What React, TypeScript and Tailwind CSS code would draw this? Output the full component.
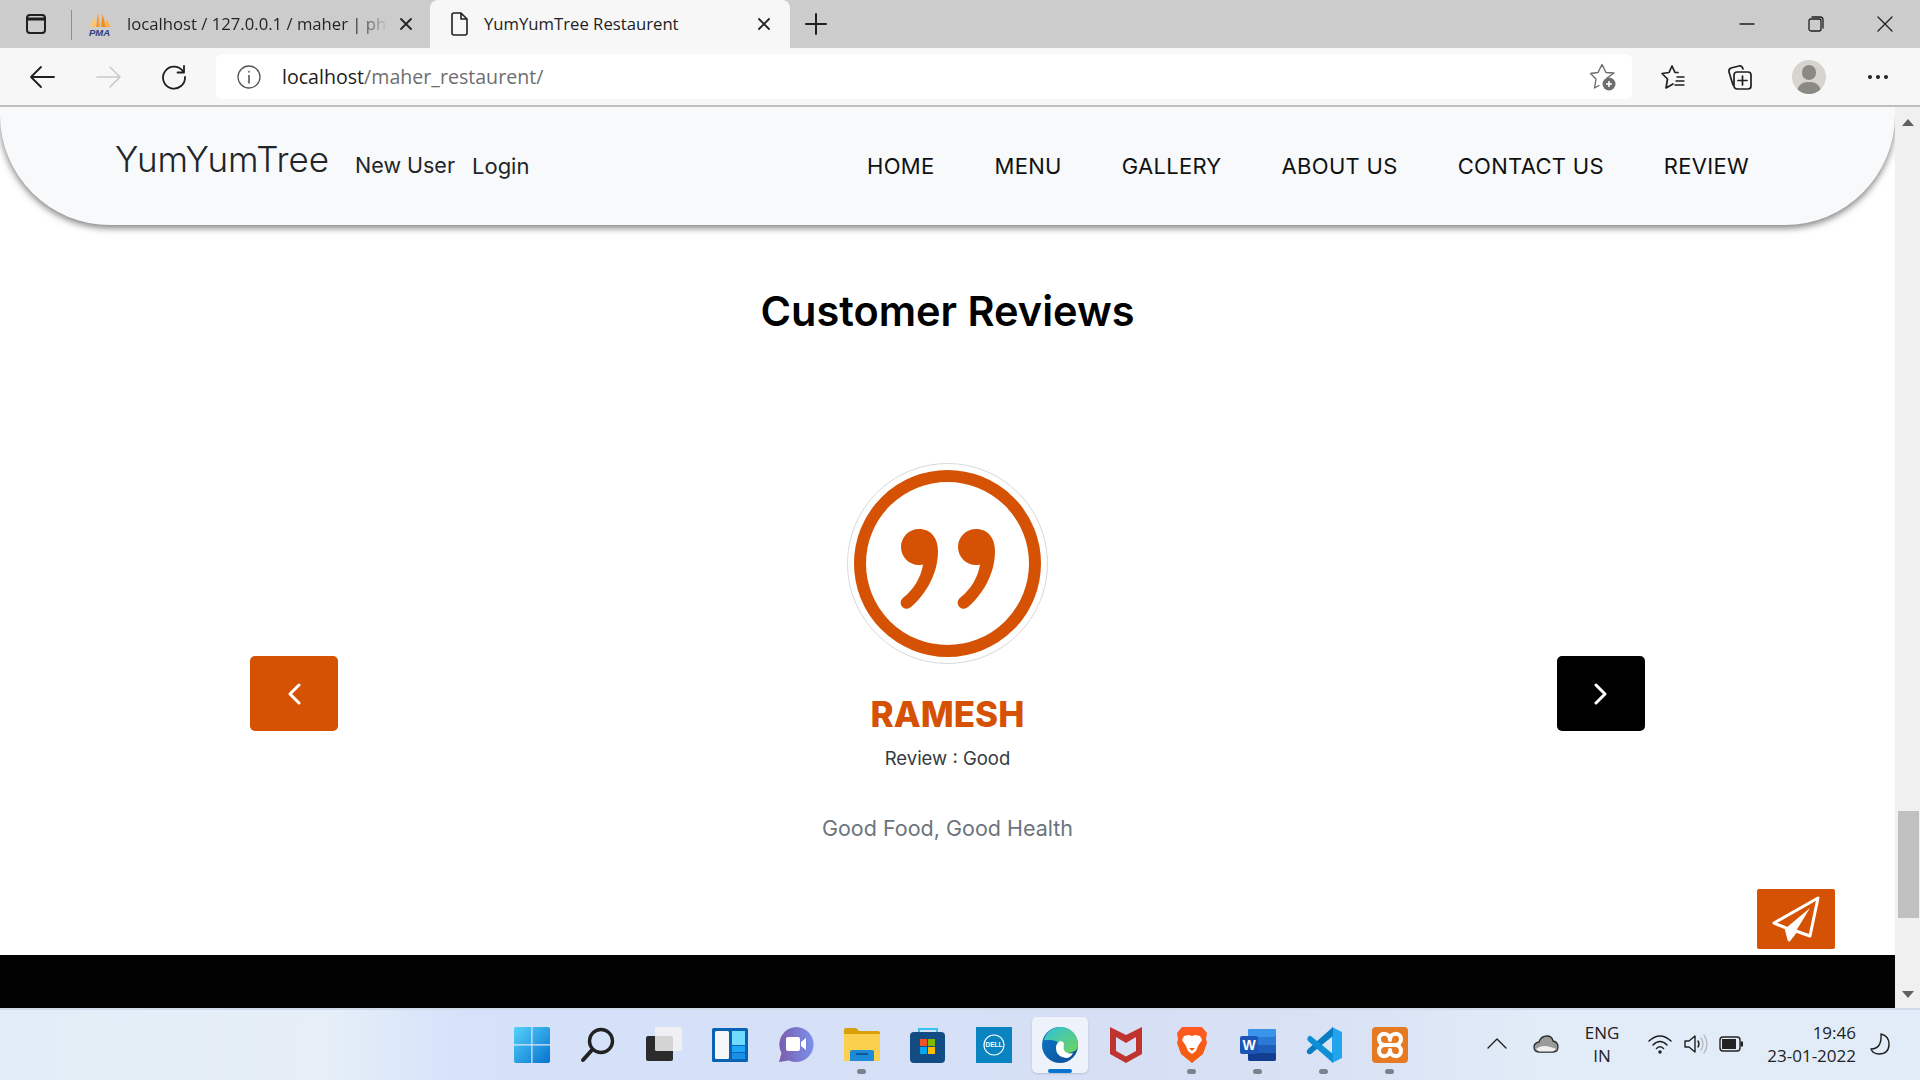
import React from "react";

const ORANGE = "#d55204";

function Stroke({ w, h, children, sw = 1.5, color = "#1f1f1f", className = "" }: { w: number; h: number; children: React.ReactNode; sw?: number; color?: string; className?: string }) {
  return (
    <svg width={w} height={h} viewBox={`0 0 ${w} ${h}`} fill="none" stroke={color} strokeWidth={sw} strokeLinecap="round" strokeLinejoin="round" className={className}>
      {children}
    </svg>
  );
}

function CloseX({ color = "#222" }: { color?: string }) {
  return (
    <Stroke w={14} h={14} sw={1.8} color={color}>
      <path d="M2 2 L12 12 M12 2 L2 12" />
    </Stroke>
  );
}

function PmaLogo() {
  return (
    <svg width="24" height="24" viewBox="0 0 24 24">
      <path d="M1 15 L7 5 L7 15 Z" fill="#fbc66e" />
      <path d="M8 15 L10 1 L12 15 Z" fill="#f79a24" />
      <path d="M13 15 L14.5 2 L18 15 Z" fill="#f28c1e" />
      <path d="M18 15 L18 7 L23 15 Z" fill="#f9b04a" />
      <text x="1" y="23.5" fontSize="9.5" fontWeight="700" fontStyle="italic" fill="#2f3c80" fontFamily="Liberation Sans">PMA</text>
    </svg>
  );
}

function TabBar() {
  return (
    <div className="flex h-[48px] shrink-0 items-start bg-[#cccccc] font-['Open_Sans',sans-serif] text-[#222]">
      <div className="flex h-[48px] w-[71px] items-center pl-[26px]">
        <Stroke w={20} h={20} sw={2}>
          <rect x="1" y="1" width="18" height="18" rx="3" />
          <path d="M1 5 H19" strokeWidth={3} />
        </Stroke>
      </div>
      <div className="mt-[10px] h-[30px] w-px bg-[#8f8f8f]" />
      <div className="flex h-[48px] w-[358px] items-center pl-[16px]">
        <PmaLogo />
        <span className="ml-[15px] w-[258px] whitespace-nowrap bg-gradient-to-r from-[#222] from-[88%] to-[#bdbdbd] bg-clip-text text-[16.7px] text-transparent">
          localhost / 127.0.0.1 / maher | ph
        </span>
        <span className="ml-[14px] flex"><CloseX /></span>
      </div>
      <div className="flex h-[48px] w-[360px] items-center rounded-t-[8px] bg-[#f7f7f7] pl-[20px]">
        <Stroke w={18} h={24} sw={1.6}>
          <path d="M2 3 Q2 1 4 1 H11 L17 7 V21 Q17 23 15 23 H4 Q2 23 2 21 Z M11 1 V7 H17" />
        </Stroke>
        <span className="ml-[16px] w-[273px] whitespace-nowrap text-[16.7px] leading-none">YumYumTree Restaurent</span>
        <span className="flex"><CloseX /></span>
      </div>
      <div className="flex h-[48px] w-[52px] items-center justify-center">
        <Stroke w={22} h={22} sw={2}>
          <path d="M11 1 V21 M1 11 H21" />
        </Stroke>
      </div>
      <div className="ml-auto flex h-[48px] items-center pr-[27px]">
        <Stroke w={16} h={16} sw={1.3}><path d="M1 8 H15" /></Stroke>
        <div className="ml-[53px] flex">
          <Stroke w={16} h={16} sw={1.3}>
            <rect x="1" y="3" width="12" height="12" rx="2" />
            <path d="M4 1 H12 Q15 1 15 4 V12" />
          </Stroke>
        </div>
        <div className="ml-[53px] flex">
          <Stroke w={16} h={16} sw={1.3}><path d="M1 1 L15 15 M15 1 L1 15" /></Stroke>
        </div>
      </div>
    </div>
  );
}

function ToolBar() {
  return (
    <div className="flex h-[59px] shrink-0 items-start border-b-2 border-[#bfbfbf] bg-[#f7f7f7] font-['Open_Sans',sans-serif]">
      <div className="flex h-[57px] w-[216px] items-center pl-[29px]">
        <Stroke w={26} h={24} sw={1.8}>
          <path d="M25 12 H2 M12 2 L2 12 L12 22" />
        </Stroke>
        <div className="ml-[41px] flex">
          <Stroke w={26} h={24} sw={1.6} color="#c9c9c9">
            <path d="M1 12 H24 M14 2 L24 12 L14 22" />
          </Stroke>
        </div>
        <div className="ml-[39px] flex">
          <Stroke w={26} h={26} sw={1.8}>
            <path d="M22.5 8 A11 11 0 1 0 24 13" />
            <path d="M23 2 V8.5 H16.5" />
          </Stroke>
        </div>
      </div>
      <div className="mt-[6px] flex h-[45px] w-[1416px] items-center rounded-[6px] bg-white pl-[21px] pr-[15px]">
        <Stroke w={24} h={24} sw={1.3} color="#555">
          <circle cx="12" cy="12" r="11" />
          <path d="M12 10.5 V18 M12 6.5 V7" strokeWidth={1.6} />
        </Stroke>
        <span className="ml-[21px] text-[19.6px] leading-none text-[#1c1c1c]">localhost<span className="text-[#6e6e6e]">/maher_restaurent/</span></span>
        <div className="ml-auto flex">
          <svg width="28" height="28" viewBox="0 0 28 28" fill="none">
            <path d="M18 15 L25 10 L17 9.5 L13 1.5 L9 9.5 L1.5 10.5 L7 16 L5.5 25 L10 22.5" stroke="#6d6d6d" strokeWidth="1.4" strokeLinejoin="round" strokeLinecap="round" />
            <circle cx="20" cy="21" r="6.5" fill="#6d6d6d" />
            <path d="M20 18 V24 M17 21 H23" stroke="#fff" strokeWidth="1.6" />
          </svg>
        </div>
      </div>
      <div className="flex h-[57px] flex-1 items-center">
        <div className="ml-[28px] flex">
          <Stroke w={26} h={26} sw={1.7}>
            <path d="M18 8.5 L15 8.5 L12 2 L9 8.5 L2 9.5 L7.5 15 L6 24 L13 20" />
            <path d="M17 13 H24 M16 17 H24 M15 21 H24" strokeWidth={1.4} />
          </Stroke>
        </div>
        <div className="ml-[41px] flex">
          <Stroke w={26} h={26} sw={1.7}>
            <path d="M6 21 L2 8 Q1.5 5 4 4 L12 2 Q15 1.5 16 5" />
            <rect x="7" y="8" width="17" height="17" rx="3" />
            <path d="M15.5 12 V21 M11 16.5 H20" />
          </Stroke>
        </div>
        <div className="relative ml-[39px] flex h-[34px] w-[34px] items-center justify-center overflow-hidden rounded-full bg-[#d6d4cf]">
          <div className="absolute left-[10px] top-[5px] h-[15px] w-[14px] rounded-full bg-[#8b8984]" />
          <div className="absolute left-[5px] top-[22px] h-[20px] w-[24px] rounded-full bg-[#8b8984]" />
        </div>
        <div className="ml-[42px] flex gap-[4px]">
          <div className="h-[4px] w-[4px] rounded-full bg-[#222]" />
          <div className="h-[4px] w-[4px] rounded-full bg-[#222]" />
          <div className="h-[4px] w-[4px] rounded-full bg-[#222]" />
        </div>
      </div>
    </div>
  );
}

function Header() {
  const nav = ["HOME", "MENU", "GALLERY", "ABOUT US", "CONTACT US", "REVIEW"];
  return (
    <header className="relative z-10 flex h-[118px] shrink-0 items-center rounded-b-[110px] bg-[#f8f9fa] pl-[115px] pr-[116px] shadow-[0_3px_7px_rgba(0,0,0,0.5)]">
      <span className="mb-[14px] text-[35px] font-light leading-none text-[#212529]">YumYumTree</span>
      <span className="ml-[26px] text-[21.5px] leading-none text-[#212529]">New User</span>
      <span className="ml-[17px] text-[22px] leading-none text-[#212529]">Login</span>
      <nav className="ml-auto flex">
        {nav.map((n) => (
          <span key={n} className="px-[30px] text-[22px] leading-none tracking-[0.3px] text-[#111]">{n}</span>
        ))}
      </nav>
    </header>
  );
}

function QuoteMark() {
  const d = "M72 66 C84 66 91 75 91 88 C91 112 78 132 64 144 C60 147 56 146 54 142 C53 139 54 136 57 134 C66 127 74 115 76 101.5 C74 102 73 102 72 102 C62 102 54 94 54 84 C54 74 62 66 72 66 Z";
  return (
    <svg width="201" height="201" viewBox="0 0 201 201" fill="none">
      <circle cx="100.5" cy="100.5" r="100" stroke="#d5d9de" strokeWidth="1" />
      <circle cx="100.5" cy="100.5" r="87.5" stroke={ORANGE} strokeWidth="12" />
      <path d={d} fill={ORANGE} />
      <path d={d} fill={ORANGE} transform="translate(57 0)" />
    </svg>
  );
}

function Chevron({ dir }: { dir: "l" | "r" }) {
  return (
    <Stroke w={14} h={22} sw={3} color="#fff">
      <path d={dir === "l" ? "M12 2 L3 11 L12 20" : "M2 2 L11 11 L2 20"} />
    </Stroke>
  );
}

function Reviews() {
  return (
    <section className="relative flex flex-1 flex-col items-center bg-white">
      <h1 className="mt-[62px] text-[41.5px] font-semibold leading-[48px] text-black">Customer Reviews</h1>
      <div className="mt-[128px] flex w-full items-start justify-between px-[250px]">
        <div className="mt-[193px] flex h-[75px] w-[88px] items-center justify-center rounded-[5px] bg-[#d55204]">
          <Chevron dir="l" />
        </div>
        <div className="flex flex-col items-center">
          <QuoteMark />
          <div className="mt-[29px] text-[35px] font-extrabold leading-[42px] text-[#d55204]">RAMESH</div>
          <div className="mt-[10px] text-[18.5px] leading-[27px] text-[#343a40]">Review : Good</div>
          <div className="mt-[40px] text-[21.5px] leading-[32px] text-[#6c757d]">Good Food, Good Health</div>
        </div>
        <div className="mt-[193px] flex h-[75px] w-[88px] items-center justify-center rounded-[5px] bg-black">
          <Chevron dir="r" />
        </div>
      </div>
      <div className="absolute left-[1757px] top-[664px] flex h-[60px] w-[78px] items-center justify-center rounded-[2px] bg-[#d55204]">
        <svg width="48" height="46" viewBox="0 0 48 46" fill="none">
          <path d="M46 2 L2 27 L14 32 L17 44 L24 35 L38 40 Z" stroke="#fff" strokeWidth="3" strokeLinejoin="round" />
          <path d="M38 12 L14 32 L17 44 L24 35 Z" fill="#fff" />
        </svg>
      </div>
    </section>
  );
}

function Scrollbar() {
  return (
    <div className="flex w-[25px] shrink-0 flex-col items-center bg-[#f0f0f0]">
      <svg className="mt-[12px]" width="12" height="7" viewBox="0 0 12 7"><path d="M6 0 L12 7 H0 Z" fill="#606060" /></svg>
      <div className="ml-[2px] mt-[685px] h-[107px] w-[21px] bg-[#c0c0c0]" />
      <svg className="mt-[73px]" width="12" height="7" viewBox="0 0 12 7"><path d="M0 0 H12 L6 7 Z" fill="#606060" /></svg>
    </div>
  );
}

function Tile({ children, dot, active }: { children: React.ReactNode; dot?: boolean; active?: boolean }) {
  return (
    <div className="relative flex h-[72px] w-[36px] items-center justify-center pt-[2px]">
      {active && <div className="absolute -left-[10px] top-[9px] h-[56px] w-[56px] rounded-[5px] bg-[#eef2fb] shadow-[0_1px_2px_rgba(0,0,0,0.15)]" />}
      {active && <div className="absolute left-[6px] top-[61px] h-[4px] w-[24px] rounded-full bg-[#0a74d1]" />}
      {dot && <div className="absolute left-[13px] top-[61px] h-[5px] w-[9px] rounded-full bg-[#7c818c]" />}
      <div className="relative flex">{children}</div>
    </div>
  );
}

function TaskIcons() {
  return (
    <div className="flex gap-[30px]">
      <Tile>
        <svg width="36" height="36" viewBox="0 0 36 36">
          <defs><linearGradient id="w" x1="0" y1="0" x2="1" y2="1"><stop offset="0" stopColor="#55d2fb" /><stop offset="1" stopColor="#0672cf" /></linearGradient></defs>
          <rect x="0" y="0" width="36" height="36" rx="2" fill="url(#w)" />
          <path d="M17.9 0 V36 M0 17.9 H36" stroke="#dbe6f7" strokeWidth="1.2" />
        </svg>
      </Tile>
      <Tile>
        <Stroke w={36} h={36} sw={3.4} color="#222">
          <circle cx="21" cy="14" r="11.5" />
          <path d="M12 23 L3 33" strokeWidth={4} />
        </Stroke>
      </Tile>
      <Tile>
        <svg width="36" height="36" viewBox="0 0 36 36">
          <rect x="0" y="9" width="27" height="25" rx="2" fill="#2b2b2b" />
          <rect x="9" y="0" width="27" height="24" rx="1.5" fill="#f2f2f2" fillOpacity="0.85" />
        </svg>
      </Tile>
      <Tile>
        <svg width="36" height="34" viewBox="0 0 36 34">
          <rect width="36" height="34" rx="1.5" fill="#0a62b3" />
          <rect x="3" y="3" width="14" height="28" rx="1.5" fill="#f4f6f8" />
          <rect x="20" y="3" width="13" height="14" fill="#6fdcff" />
          <rect x="20" y="18" width="13" height="6" fill="#1da6f5" />
          <rect x="20" y="25" width="13" height="6" fill="#1a8fe6" />
        </svg>
      </Tile>
      <Tile>
        <svg width="36" height="36" viewBox="0 0 36 36">
          <defs><linearGradient id="c" x1="0" y1="0" x2="1" y2="0"><stop offset="0" stopColor="#7a5cae" /><stop offset="1" stopColor="#7a92ea" /></linearGradient></defs>
          <path d="M18 0 A17.5 17.5 0 1 1 11 33.5 L1 35 L3.5 26 A17.5 17.5 0 0 1 18 0 Z" fill="url(#c)" />
          <rect x="8" y="10" width="14" height="14" rx="2" fill="#fff" />
          <path d="M23 15 L28 11 V23 L23 19 Z" fill="#fff" />
        </svg>
      </Tile>
      <Tile dot>
        <svg width="36" height="34" viewBox="0 0 36 34">
          <path d="M0 2 Q0 0 2 0 H12 L15 3 H34 Q36 3 36 5 V10 H0 Z" fill="#d9a107" />
          <path d="M0 6 H36 V33 H0 Z" fill="#fcd04f" />
          <path d="M6 33 V24 Q6 22 8 22 H28 Q30 22 30 24 V33 Z" fill="#1c8ad6" />
          <path d="M12 26 H24" stroke="#0c4f88" strokeWidth="1.6" />
        </svg>
      </Tile>
      <Tile>
        <svg width="36" height="36" viewBox="0 0 36 36" fill="none">
          <path d="M9 7 V2 H27 V7" stroke="#35c3f2" strokeWidth="2" />
          <rect y="5" width="35" height="31" rx="4" fill="#134b83" />
          <rect x="10" y="12" width="7" height="7" fill="#f25326" />
          <rect x="18" y="12" width="7" height="7" fill="#7fba00" />
          <rect x="10" y="20" width="7" height="7" fill="#05a6f0" />
          <rect x="18" y="20" width="7" height="7" fill="#ffba08" />
        </svg>
      </Tile>
      <Tile>
        <svg width="36" height="36" viewBox="0 0 36 36" fill="none">
          <rect width="36" height="36" fill="#0a84c1" />
          <circle cx="18" cy="18" r="10" stroke="#fff" strokeWidth="1.2" />
          <text x="18" y="20.3" textAnchor="middle" fontSize="6.5" fontWeight="700" fill="#fff" fontFamily="Liberation Sans">DELL</text>
        </svg>
      </Tile>
      <Tile active>
        <svg width="36" height="36" viewBox="0 0 36 36">
          <defs>
            <linearGradient id="e1" x1="0" y1="0" x2="1" y2="1"><stop offset="0" stopColor="#2fc2dc" /><stop offset="1" stopColor="#6fd35a" /></linearGradient>
            <linearGradient id="e2" x1="0" y1="0" x2="1" y2="1"><stop offset="0" stopColor="#0d7dc9" /><stop offset="1" stopColor="#0c4a96" /></linearGradient>
          </defs>
          <circle cx="18" cy="18" r="18" fill="url(#e2)" />
          <path d="M2 13 C5 3 13 0 18 0 C29 0 36 8 36 18 C36 24 30 26 25 26 C20 26 18 24 19 21 C20 17 14 13 9 13 C6 13 4 13 2 13 Z" fill="url(#e1)" />
          <path d="M14 21 C14 16 18 13 21 15 C23 17 21 20 22 23 C23 26 28 27 31 26 C28 33 22 31 18 29 C15 27 14 24 14 21 Z" fill="#fff" />
        </svg>
      </Tile>
      <Tile>
        <svg width="32" height="36" viewBox="0 0 32 36"><path d="M0 0 L16 8 L32 0 V27 L16 36 L0 27 Z M6 10 V24 L16 29.5 L26 24 V10 L16 16 Z" fillRule="evenodd" fill="#c0342f" /></svg>
      </Tile>
      <Tile dot>
        <svg width="32" height="36" viewBox="0 0 32 36">
          <defs><linearGradient id="b" x1="0" y1="0" x2="0" y2="1"><stop offset="0" stopColor="#ff5a24" /><stop offset="1" stopColor="#f25c0a" /></linearGradient></defs>
          <path d="M6 0 H26 L31 6 L30 12 L31 16 L27 27 L16 36 L5 27 L1 16 L2 12 L1 6 Z" fill="url(#b)" />
          <path d="M8 9 L13 8 L16 9 L19 8 L24 9 L26 13 L22 19 L20 24 L16 27 L12 24 L10 19 L6 13 Z" fill="#fff" />
          <path d="M13 21 L19 21 L16 24 Z" fill="#f25c0a" />
        </svg>
      </Tile>
      <Tile dot>
        <svg width="36" height="32" viewBox="0 0 36 32">
          <rect x="8" width="28" height="32" rx="2" fill="#1f5dbb" />
          <rect x="8" width="28" height="8" rx="2" fill="#3a94ea" />
          <rect x="8" y="8" width="28" height="8" fill="#2b78d6" />
          <rect x="8" y="24" width="28" height="8" rx="2" fill="#123e92" />
          <rect y="7" width="18" height="18" rx="2" fill="#1d55b4" />
          <text x="2.5" y="21" fontSize="14" fontWeight="700" fill="#fff" fontFamily="Liberation Sans">W</text>
        </svg>
      </Tile>
      <Tile dot>
        <svg width="36" height="36" viewBox="0 0 36 36">
          <path d="M26 0 L36 5 V31 L26 36 Z" fill="#22a5ec" />
          <path d="M27 0 V9 L12 21 L5 27 Q3 28 1 26 Q0 24 2 22 L27 0 Z" fill="#0a7cc2" />
          <path d="M2 10 Q3.5 8 5.5 9.5 L27 27 V36 L2 14 Q0.5 12 2 10 Z" fill="#0e8fd6" />
        </svg>
      </Tile>
      <Tile dot>
        <svg width="36" height="36" viewBox="0 0 36 36" fill="none">
          <rect width="36" height="36" rx="4" fill="#e57a23" />
          <path d="M18 13 C18 5 7 5 7 12 C7 16 10 18 13 18 C10 18 7 20 7 24 C7 31 18 31 18 23 C18 31 29 31 29 24 C29 20 26 18 23 18 C26 18 29 16 29 12 C29 5 18 5 18 13 Z" stroke="#fff" strokeWidth="4" strokeLinejoin="round" />
          <path d="M13 18 H23" stroke="#fff" strokeWidth="4" />
        </svg>
      </Tile>
    </div>
  );
}

function Tray() {
  return (
    <div className="ml-auto flex h-[72px] items-center pr-[30px] font-['Open_Sans',sans-serif] text-[#222]">
      <Stroke w={20} h={12} sw={1.4}><path d="M1 10 L10 1 L19 10" /></Stroke>
      <div className="ml-[26px] flex">
        <svg width="26" height="18" viewBox="0 0 26 18">
          <path d="M6 17 Q1 17 1 12 Q1 8 6 7 Q8 1 14 1 Q19 1 20 6 Q25 7 25 12 Q25 17 20 17 Z" fill="#9a9a9a" stroke="#2a2a2a" strokeWidth="1.3" />
          <path d="M3 14 Q10 8 23 14 L20 16.5 H6 Z" fill="#efefef" />
        </svg>
      </div>
      <div className="ml-[10px] flex w-[66px] flex-col items-center text-[17px] leading-[23px]">
        <span>ENG</span>
        <span>IN</span>
      </div>
      <div className="ml-[13px] flex">
        <Stroke w={24} h={20} sw={1.5}>
          <path d="M1 7 Q12 -3 23 7 M5 11 Q12 4 19 11 M8.5 14.5 Q12 11 15.5 14.5" />
          <circle cx="12" cy="18" r="1" fill="#222" />
        </Stroke>
      </div>
      <div className="ml-[12px] flex">
        <Stroke w={24} h={24} sw={1.4}>
          <path d="M1 9 V15 H5 L11 20 V4 L5 9 Z" />
          <path d="M14 9 Q16 12 14 15" />
          <path d="M17 6 Q21 12 17 18 M20 3 Q26 12 20 21" stroke="#b5bbc3" />
        </Stroke>
      </div>
      <div className="ml-[11px] flex">
        <svg width="24" height="16" viewBox="0 0 24 16" fill="none">
          <rect x="1" y="1" width="20" height="14" rx="3" stroke="#222" strokeWidth="1.4" />
          <rect x="3" y="3" width="14" height="10" fill="#222" />
          <rect x="21.5" y="5.5" width="2.5" height="5" fill="#222" />
        </svg>
      </div>
      <div className="ml-[23px] flex w-[90px] flex-col items-end text-[17px] leading-[23px]">
        <span>19:46</span>
        <span className="whitespace-nowrap">23-01-2022</span>
      </div>
      <div className="ml-[14px] flex">
        <Stroke w={20} h={22} sw={1.4}>
          <path d="M11 1 Q19 3 19 11 Q19 21 9 21 Q3 21 1 16 Q12 16 11 1 Z" />
        </Stroke>
      </div>
    </div>
  );
}

function Taskbar() {
  return (
    <div className="flex h-[72px] shrink-0 items-start bg-[linear-gradient(90deg,#e3edf7_0%,#e6eff8_17%,#d5e2fa_24%,#d6dff4_60%,#dbe4f5_72%,#e1ecf8_80%)] pl-[514px] shadow-[inset_0_2px_0_#d0dbea]">
      <TaskIcons />
      <Tray />
    </div>
  );
}

export default function App() {
  return (
    <div className="flex h-[1080px] w-[1920px] flex-col overflow-hidden bg-white font-['Inter',sans-serif]">
      <TabBar />
      <ToolBar />
      <div className="flex flex-1 overflow-hidden">
        <div className="flex flex-1 flex-col overflow-hidden">
          <Header />
          <Reviews />
          <footer className="h-[53px] shrink-0 bg-[#020202]" />
        </div>
        <Scrollbar />
      </div>
      <Taskbar />
    </div>
  );
}
